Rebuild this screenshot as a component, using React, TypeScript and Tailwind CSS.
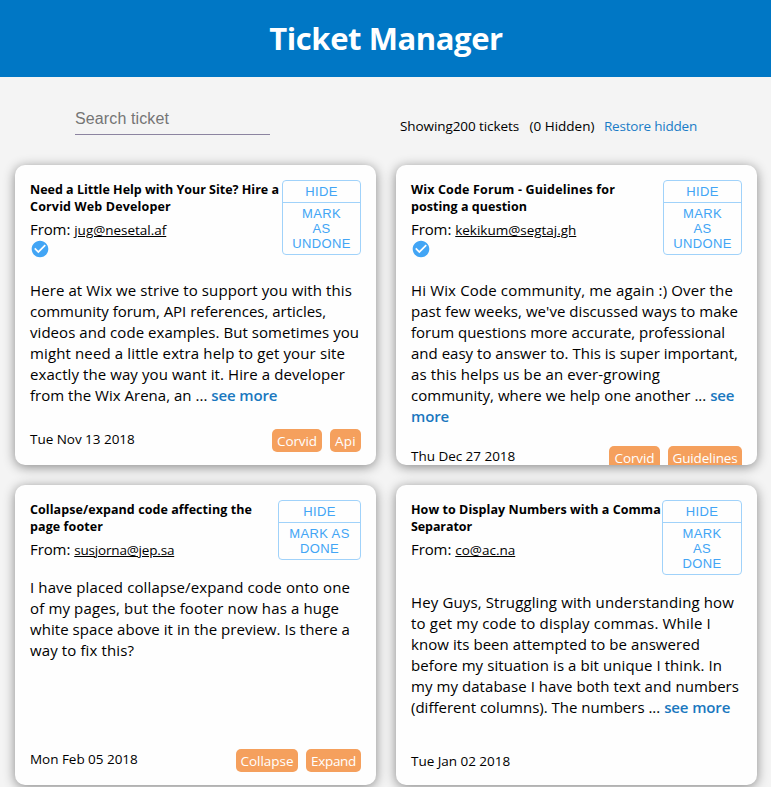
type Line = { text: string; track: string; more?: string };

type Ticket = {
  title: Line[];
  email: string;
  emailTrack: string;
  done: boolean;
  action: string[];
  actionWidth: string;
  body: Line[];
  date: string;
  tags: { label: string; style: string }[];
};

const tickets: Ticket[] = [
  {
    title: [
      { text: "Need a Little Help with Your Site? Hire a", track: "tracking-normal" },
      { text: "Corvid Web Developer", track: "tracking-[0.16px]" },
    ],
    email: "jug@nesetal.af",
    emailTrack: "tracking-[-0.02px]",
    done: true,
    action: ["MARK", "AS", "UNDONE"],
    actionWidth: "w-[79px]",
    body: [
      { text: "Here at Wix we strive to support you with this", track: "tracking-[0.1px]" },
      { text: "community forum, API references, articles,", track: "tracking-[-0.02px]" },
      { text: "videos and code examples. But sometimes you", track: "tracking-[0.05px]" },
      { text: "might need a little extra help to get your site", track: "tracking-[0.13px]" },
      { text: "exactly the way you want it. Hire a developer", track: "tracking-[0.085px]" },
      { text: "from the Wix Arena, an ...", track: "tracking-[0.02px]", more: "see more" },
    ],
    date: "Tue Nov 13 2018",
    tags: [
      { label: "Corvid", style: "w-[50px] tracking-[-0.09px]" },
      { label: "Api", style: "w-[31px] tracking-[0.2px]" },
    ],
  },
  {
    title: [
      { text: "Wix Code Forum - Guidelines for", track: "tracking-[0.154px]" },
      { text: "posting a question", track: "tracking-[0.036px]" },
    ],
    email: "kekikum@segtaj.gh",
    emailTrack: "tracking-[-0.02px]",
    done: true,
    action: ["MARK", "AS", "UNDONE"],
    actionWidth: "w-[79px]",
    body: [
      { text: "Hi Wix Code community, me again :) Over the", track: "tracking-[0.148px]" },
      { text: "past few weeks, we've discussed ways to make", track: "tracking-[0.047px]" },
      { text: "forum questions more accurate, professional", track: "tracking-[-0.024px]" },
      { text: "and easy to answer to. This is super important,", track: "tracking-[0.013px]" },
      { text: "as this helps us be an ever-growing", track: "tracking-[0.117px]" },
      { text: "community, where we help one another ...", track: "tracking-[0.01px]", more: "see" },
      { text: "", track: "tracking-normal", more: "more" },
    ],
    date: "Thu Dec 27 2018",
    tags: [
      { label: "Corvid", style: "w-[51px] tracking-[-0.09px]" },
      { label: "Guidelines", style: "w-[74px] tracking-[-0.14px]" },
    ],
  },
  {
    title: [
      { text: "Collapse/expand code affecting the", track: "tracking-[0.072px]" },
      { text: "page footer", track: "tracking-[0.094px]" },
    ],
    email: "susjorna@jep.sa",
    emailTrack: "tracking-[-0.188px]",
    done: false,
    action: ["MARK AS", "DONE"],
    actionWidth: "w-[83px]",
    body: [
      { text: "I have placed collapse/expand code onto one", track: "tracking-[0.124px]" },
      { text: "of my pages, but the footer now has a huge", track: "tracking-[0.139px]" },
      { text: "white space above it in the preview. Is there a", track: "tracking-[0.054px]" },
      { text: "way to fix this?", track: "tracking-[0.113px]" },
    ],
    date: "Mon Feb 05 2018",
    tags: [
      { label: "Collapse", style: "w-[62px] tracking-[-0.03px]" },
      { label: "Expand", style: "w-[55px] tracking-[-0.3px]" },
    ],
  },
  {
    title: [
      { text: "How to Display Numbers with a Comma", track: "tracking-[0.06px]" },
      { text: "Separator", track: "tracking-[-0.09px]" },
    ],
    email: "co@ac.na",
    emailTrack: "tracking-normal",
    done: false,
    action: ["MARK", "AS", "DONE"],
    actionWidth: "w-[80px]",
    body: [
      { text: "Hey Guys, Struggling with understanding how", track: "tracking-[0.128px]" },
      { text: "to get my code to display commas. While I", track: "tracking-[0.18px]" },
      { text: "know its been attempted to be answered", track: "tracking-[0.065px]" },
      { text: "before my situation is a bit unique I think. In", track: "tracking-[0.077px]" },
      { text: "my my database I have both text and numbers", track: "tracking-[0.059px]" },
      { text: "(different columns). The numbers ...", track: "tracking-normal", more: "see more" },
    ],
    date: "Tue Jan 02 2018",
    tags: [],
  },
];

function CheckCircle() {
  return (
    <svg viewBox="0 0 24 24" className="block size-5 fill-[#42a5f5]">
      <path d="M12 2C6.48 2 2 6.48 2 12s4.48 10 10 10 10-4.48 10-10S17.52 2 12 2zm-2 15l-5-5 1.41-1.41L10 14.17l7.59-7.59L19 8l-9 9z" />
    </svg>
  );
}

function TicketActions({ lines, width }: { lines: string[]; width: string }) {
  return (
    <div
      className={`${width} shrink-0 rounded-[4px] border border-[#a0d2fa] text-center font-['Liberation_Sans',Arial,sans-serif] text-[13px] leading-[15px] tracking-[0.37px] text-[#42a5f5]`}
    >
      <button className="block w-full border-b border-[#a0d2fa] py-[3px]">HIDE</button>
      <button className="block w-full py-[3px]">
        {lines.map((line) => (
          <span key={line} className="block">{line}</span>
        ))}
      </button>
    </div>
  );
}

function TicketCard({ ticket }: { ticket: Ticket }) {
  return (
    <li className="flex h-[300px] flex-col overflow-hidden rounded-[10px] bg-[#fefefe] px-[15px] pt-[15px] pb-[13px] shadow-[0_2px_12px_rgba(0,0,0,0.45)]">
      <div className="flex shrink-0 items-start justify-between">
        <div className="w-0 grow whitespace-nowrap">
          <h5 className="pt-px text-[12.5px] leading-[17px] font-bold">
            {ticket.title.map((line) => (
              <span key={line.text} className={`block ${line.track}`}>{line.text}</span>
            ))}
          </h5>
          <div className="mt-1 flex h-5 items-baseline gap-1 leading-[21px]">
            <span className="text-[15px] tracking-[-0.1px]">From:</span>
            <span className={`text-[13.5px] underline ${ticket.emailTrack}`}>{ticket.email}</span>
          </div>
          {ticket.done && (
            <div className="h-6">
              <CheckCircle />
            </div>
          )}
        </div>
        <TicketActions lines={ticket.action} width={ticket.actionWidth} />
      </div>
      <p className="mt-[17px] shrink-0 text-[15px] leading-[21px] whitespace-nowrap">
        {ticket.body.map((line, i) => (
          <span key={i} className={`block ${line.track}`}>
            {line.text}
            {line.more && (
              <>
                {line.text && " "}
                <a className="font-semibold tracking-[-0.13px] text-[#1a78bf]">{line.more}</a>
              </>
            )}
          </span>
        ))}
      </p>
      <div className="mt-auto flex shrink-0 items-start justify-between pt-[19px] text-[13.5px]">
        <span
          className={
            ticket.tags.length
              ? "h-[23px] leading-[20px] tracking-[-0.03px]"
              : "h-[21px] leading-[20px] tracking-[-0.03px]"
          }
        >
          {ticket.date}
        </span>
        <div className="flex gap-2">
          {ticket.tags.map((tag) => (
            <span
              key={tag.label}
              className={`h-[23px] rounded-[5px] bg-[#f5a05d] text-center leading-[24px] text-white ${tag.style}`}
            >
              {tag.label}
            </span>
          ))}
        </div>
      </div>
    </li>
  );
}

export default function App() {
  return (
    <main className="h-[787px] overflow-hidden bg-[#f4f4f4] font-['Open_Sans','Noto_Sans',sans-serif] text-black">
      <header className="flex h-[77px] items-center justify-center bg-[#0077c5]">
        <h1 className="pl-px text-[31px] leading-none font-bold tracking-[-0.42px] text-white">Ticket Manager</h1>
      </header>
      <div className="flex h-[88px]">
        <div className="w-[400px] pt-[26px] pl-[75px]">
          <input
            placeholder="Search ticket"
            className="block h-8 w-[195px] border-b border-[#8c84a0] bg-transparent font-['Liberation_Sans',Arial,sans-serif] text-base tracking-[0.12px] outline-none placeholder:text-[#757575]"
          />
        </div>
        <div className="flex pt-[39px] text-[13.5px] leading-[20px] whitespace-nowrap">
          <span className="w-[129.5px] tracking-[-0.087px]">Showing200 tickets</span>
          <span className="w-[74.5px]">(0 Hidden)</span>
          <a className="tracking-[-0.211px] text-[#1a7cc7]">Restore hidden</a>
        </div>
      </div>
      <ul className="ml-[15px] grid w-[742px] grid-cols-2 gap-5">
        {tickets.map((ticket) => (
          <TicketCard key={ticket.email} ticket={ticket} />
        ))}
      </ul>
    </main>
  );
}
